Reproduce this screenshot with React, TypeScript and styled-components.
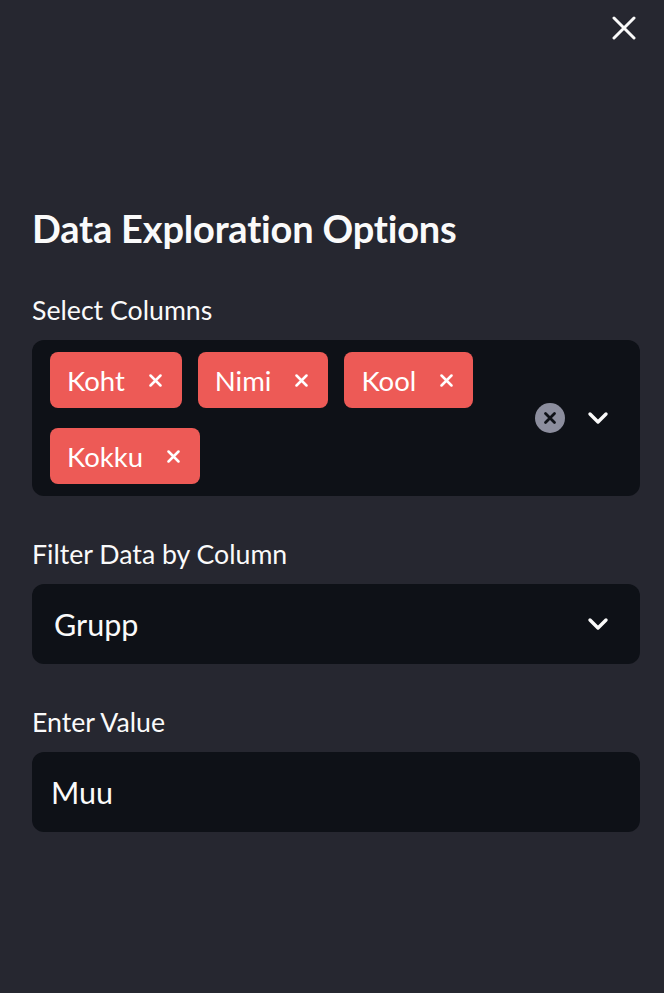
import React from "react";
import styled, { createGlobalStyle } from "styled-components";

const Global = createGlobalStyle`
  html, body { margin: 0; padding: 0; background: #262730; }
  body { font-family: Lato, "Noto Sans", sans-serif; color: #fafafa; }
`;

const Sidebar = styled.aside`
  width: 664px;
  height: 993px;
  box-sizing: border-box;
  background: #262730;
  padding: 0 24px 0 32px;
  display: flex;
  flex-direction: column;
`;

const Header = styled.div`
  height: 56px;
  display: flex;
  justify-content: flex-end;
  align-items: center;
`;

const CloseButton = styled.button`
  width: 32px;
  height: 32px;
  border: none;
  background: transparent;
  padding: 0;
  display: flex;
  align-items: center;
  justify-content: center;
  color: #fafafa;
`;

const Title = styled.h2`
  margin: 148px 0 0;
  font-size: 38px;
  font-weight: 700;
  line-height: 48px;
  letter-spacing: -0.2px;
`;

const Field = styled.div<{ $top: number }>`
  display: flex;
  flex-direction: column;
  margin-top: ${(p) => p.$top}px;
`;

const Label = styled.label`
  font-size: 26.7px;
  line-height: 36px;
  margin-bottom: 12px;
`;

const Box = styled.div`
  background: #0e1117;
  border-radius: 12px;
  display: flex;
  align-items: center;
  min-height: 80px;
  box-sizing: border-box;
`;

const TagArea = styled.div`
  flex: 1;
  display: flex;
  flex-wrap: wrap;
  column-gap: 16px;
  row-gap: 20px;
  padding: 12px 0 12px 18px;
`;

const Tag = styled.span`
  height: 56px;
  background: #ed5a56;
  border-radius: 8px;
  display: inline-flex;
  align-items: center;
  padding: 0 20px 0 17px;
  gap: 24px;
  font-size: 27.5px;
  color: #fff;
`;

const Controls = styled.div`
  display: flex;
  align-items: center;
  gap: 22px;
  padding-right: 31px;
`;

const ValueText = styled.span<{ $pad: number }>`
  flex: 1;
  font-size: 30.5px;
  padding-left: ${(p) => p.$pad}px;
`;

const Chevron = () => (
  <svg width="22" height="14" viewBox="0 0 22 14">
    <path d="M3 3l8 8 8-8" stroke="#fafafa" strokeWidth="3.4" fill="none" strokeLinecap="round" strokeLinejoin="round" />
  </svg>
);

const SmallX = () => (
  <svg width="13" height="13" viewBox="0 0 13 13">
    <path d="M1.5 1.5l10 10M11.5 1.5l-10 10" stroke="#fff" strokeWidth="2.5" strokeLinecap="round" />
  </svg>
);

const ClearIcon = () => (
  <svg width="30" height="30" viewBox="0 0 30 30">
    <circle cx="15" cy="15" r="15" fill="#8c8e9e" />
    <path d="M10.5 10.5l9 9M19.5 10.5l-9 9" stroke="#0e1117" strokeWidth="2.8" strokeLinecap="round" />
  </svg>
);

export default function App() {
  const tags = ["Koht", "Nimi", "Kool", "Kokku"];
  return (
    <>
      <Global />
      <Sidebar>
        <Header>
          <CloseButton aria-label="close">
            <svg width="24" height="24" viewBox="0 0 24 24">
              <path d="M2 2l20 20M22 2L2 22" stroke="#fafafa" strokeWidth="3" strokeLinecap="round" />
            </svg>
          </CloseButton>
        </Header>
        <Title>Data Exploration Options</Title>
        <Field $top={40}>
          <Label>Select Columns</Label>
          <Box>
            <TagArea>
              {tags.map((t) => (
                <Tag key={t}>
                  {t}
                  <SmallX />
                </Tag>
              ))}
            </TagArea>
            <Controls>
              <ClearIcon />
              <Chevron />
            </Controls>
          </Box>
        </Field>
        <Field $top={40}>
          <Label>Filter Data by Column</Label>
          <Box>
            <ValueText $pad={22}>Grupp</ValueText>
            <Controls>
              <Chevron />
            </Controls>
          </Box>
        </Field>
        <Field $top={40}>
          <Label>Enter Value</Label>
          <Box>
            <ValueText $pad={19}>Muu</ValueText>
          </Box>
        </Field>
      </Sidebar>
    </>
  );
}
